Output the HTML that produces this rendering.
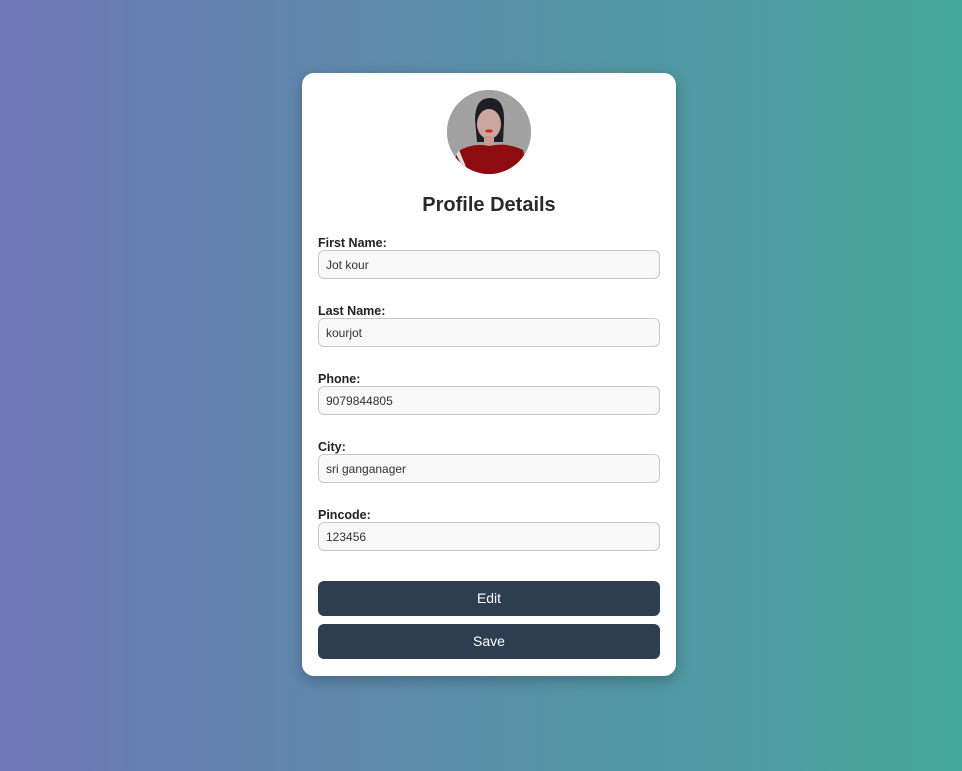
<!DOCTYPE html>
<html><head><style>
body{margin:0;width:962px;height:771px;background:linear-gradient(90deg,#6e78b6,#44a79b);font-family:"Liberation Sans",sans-serif;position:relative;overflow:hidden}
.card{position:absolute;left:302px;top:73px;width:374px;height:603px;background:#fff;border-radius:12px;box-shadow:0 4px 14px rgba(0,0,0,.25)}
.av{position:absolute;left:145px;top:17px;width:84px;height:84px;border-radius:50%;overflow:hidden;background:#a0a0a0}
h2{position:absolute;top:120px;left:0;width:100%;text-align:center;margin:0;font-size:20px;font-weight:bold;color:#2a2a2a;line-height:24px}
.l{position:absolute;left:16px;font-size:12.5px;color:#222;font-weight:bold;line-height:14px}
.i{position:absolute;left:16px;border:1px solid #c8c8c8;border-radius:6px;background:#f8f8f8;font-size:12px;color:#333;line-height:29px;padding-left:7px;box-sizing:border-box;width:342px;height:29px}
.b{position:absolute;left:16px;width:342px;height:35px;background:#2c3e50;border-radius:6px;color:#fff;font-size:14px;text-align:center;line-height:35px}
</style></head><body>
<div class="card">
<div class="av"><svg width="84" height="84" viewBox="0 0 84 84">
<rect width="84" height="84" fill="#a2a2a2"/>
<path d="M28 30 Q28 8 43 8 Q58 8 57 32 L56 52 L30 52 Z" fill="#1e1e24"/>
<ellipse cx="42" cy="34" rx="12" ry="15" fill="#c9a6a0"/>
<rect x="37" y="46" width="10" height="12" fill="#c49c95"/>
<ellipse cx="42" cy="41" rx="4" ry="1.6" fill="#d52a1a"/>
<path d="M4 84 L10 62 Q25 52 42 56 Q60 52 76 60 L82 84 Z" fill="#8e0c10"/>
<path d="M12 60 L22 84 L19 84 L9 64 Z" fill="#ddd"/>
</svg></div>
<h2>Profile Details</h2>
<div class="l" style="top:163px">First Name:</div><div class="i" style="top:177px">Jot kour</div>
<div class="l" style="top:231px">Last Name:</div><div class="i" style="top:245px">kourjot</div>
<div class="l" style="top:299px">Phone:</div><div class="i" style="top:313px">9079844805</div>
<div class="l" style="top:367px">City:</div><div class="i" style="top:381px">sri ganganager</div>
<div class="l" style="top:435px">Pincode:</div><div class="i" style="top:449px">123456</div>
<div class="b" style="top:508px">Edit</div>
<div class="b" style="top:551px">Save</div>
</div>
</body></html>
